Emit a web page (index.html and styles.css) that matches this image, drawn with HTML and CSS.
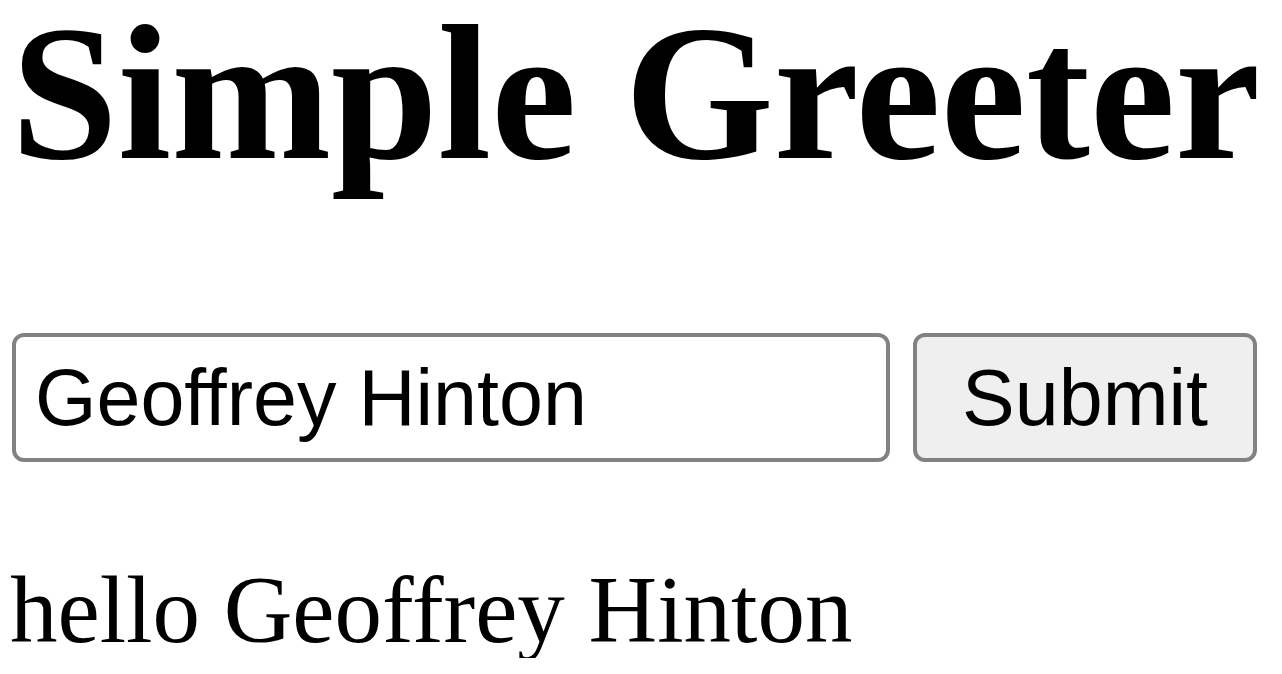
FILE: index.html
```html
<!DOCTYPE html>
<html lang="en">
<head>
<meta charset="utf-8">
<title>Simple Greeter</title>
<link rel="stylesheet" href="styles.css">
</head>
<body>
<main class="page">
  <h1 class="title">Simple Greeter</h1>
  <form class="greet-form">
    <input class="name-input" type="text" value="Geoffrey Hinton">
    <button class="submit-btn" type="button">Submit</button>
  </form>
  <p class="greeting">hello Geoffrey Hinton</p>
</main>
</body>
</html>
```

FILE: styles.css
```css
html, body {
  margin: 0;
  padding: 0;
  background: #ffffff;
}

.page {
  padding-left: 10px;
  font-family: "Liberation Serif", "Times New Roman", serif;
  color: #000;
}

.title {
  margin: 0;
  font-size: 192px;
  line-height: 188px;
  font-weight: bold;
  padding-left: 1px;
}

.greet-form {
  display: flex;
  gap: 23px;
  margin-top: 145px;
  align-items: stretch;
}

.name-input,
.submit-btn {
  box-sizing: border-box;
  height: 129px;
  font-family: "Liberation Sans", Arial, sans-serif;
  font-size: 79px;
  color: #000;
  border: 4px solid #828282;
  border-radius: 12px;
  margin: 0;
}

.name-input {
  width: 878px;
  margin-left: 2px;
  padding: 0 19px;
  background: #fff;
  outline: none;
}

.submit-btn {
  width: 344px;
  padding: 0;
  background: #efefef;
}

.greeting {
  margin: 101px 0 0 0;
  font-size: 95px;
  line-height: 95px;
}
```
